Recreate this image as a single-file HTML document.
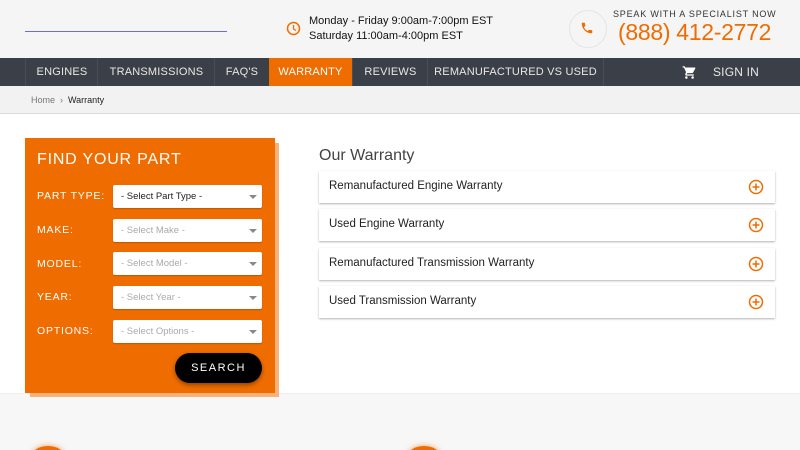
<!DOCTYPE html><html><head><style>
html,body{margin:0;width:800px;height:450px;overflow:hidden}
body{font-family:"Liberation Sans",sans-serif;background:#fff;position:relative}
.a{position:absolute}
.nav span{position:absolute;top:58px;height:28px;line-height:28px;color:#e8e8e8;font-size:11px;text-align:center;border-left:1px solid #4a4e57;letter-spacing:.2px}
.lbl{position:absolute;left:37px;color:#fff;font-size:10.5px;letter-spacing:.8px}
.sel{position:absolute;left:113px;width:149px;height:23px;background:#fff;border-radius:2px;font-size:9.5px;color:#aaa;line-height:23px;text-indent:8px;box-shadow:0 1px 1px rgba(0,0,0,.2)}
.sel:after{content:"";position:absolute;right:5px;top:10px;border:4px solid transparent;border-top:4px solid #888}
.acc{position:absolute;left:319px;width:456px;height:32px;background:#fff;box-shadow:0 1px 2px rgba(0,0,0,.3);font-size:11.5px;color:#222;line-height:31px;text-indent:10px}
.acc svg{position:absolute;right:11px;top:8px}
</style></head><body>
<div class="a" style="left:0;top:0;width:800px;height:58px;background:#f5f5f5"></div>
<div class="a" style="left:25px;top:31px;width:202px;height:1px;background:#6a6af0"></div>
<svg class="a" style="left:286px;top:21px" width="15" height="15" viewBox="0 0 15 15"><circle cx="7.5" cy="7.5" r="6" fill="none" stroke="#ef6c00" stroke-width="1.5"/><path d="M7.5 4v4l2.5 1.5" fill="none" stroke="#ef6c00" stroke-width="1.3"/></svg>
<div class="a" style="left:309px;top:14px;font-size:11px;line-height:15px;color:#111">Monday - Friday 9:00am-7:00pm EST<br>Saturday 11:00am-4:00pm EST</div>
<div class="a" style="left:569px;top:10px;width:36px;height:36px;border-radius:50%;border:1px solid #e4e4e4"></div>
<svg class="a" style="left:580px;top:21px" width="14" height="14" viewBox="0 0 24 24"><path fill="#ef6c00" d="M6.6 10.8c1.4 2.8 3.8 5.1 6.6 6.6l2.2-2.2c.3-.3.7-.4 1-.2 1.1.4 2.3.6 3.6.6.6 0 1 .4 1 1V20c0 .6-.4 1-1 1C10.6 21 3 13.4 3 4c0-.6.4-1 1-1h3.5c.6 0 1 .4 1 1 0 1.3.2 2.5.6 3.6.1.3 0 .7-.2 1z"/></svg>
<div class="a" style="left:613px;top:9px;font-size:9px;letter-spacing:.8px;color:#333">SPEAK WITH A SPECIALIST NOW</div>
<div class="a" style="left:618px;top:19px;font-size:23px;color:#ef6c00;letter-spacing:-.3px">(888) 412-2772</div>
<div class="a nav" style="left:0;top:58px;width:800px;height:28px;background:#3b3f47"></div>
<div class="nav">
<span style="left:25px;width:72px">ENGINES</span>
<span style="left:97px;width:117px">TRANSMISSIONS</span>
<span style="left:214px;width:54px">FAQ'S</span>
<span style="left:269px;width:83px;background:#ef6c00;color:#fff;border:0">WARRANTY</span>
<span style="left:352px;width:75px">REVIEWS</span>
<span style="left:427px;width:175px;border-right:1px solid #4a4e57">REMANUFACTURED VS USED</span>
<span style="left:706px;width:60px;border:0;font-size:12px">SIGN IN</span>
</div>
<svg class="a" style="left:682px;top:65px" width="15" height="15" viewBox="0 0 24 24"><path fill="#fff" d="M7 18a2 2 0 1 0 0 4 2 2 0 0 0 0-4zM1 2v2h2l3.6 7.6-1.4 2.4C5 15.4 5.6 17 7 17h12v-2H7.4l1.1-2h7.5c.8 0 1.4-.4 1.7-1l3.6-6.5A1 1 0 0 0 20.4 4H5.2l-.9-2zm16 16a2 2 0 1 0 0 4 2 2 0 0 0 0-4z"/></svg>
<div class="a" style="left:0;top:86px;width:800px;height:27px;background:#f2f2f2;border-bottom:1px solid #ddd"></div>
<div class="a" style="left:31px;top:95px;font-size:9px;color:#777">Home &nbsp;›&nbsp; <span style="color:#222">Warranty</span></div>
<div class="a" style="left:0;top:393px;width:800px;height:57px;background:#f7f7f7;border-top:1px solid #eee"></div>
<div class="a" style="left:32px;top:446px;width:32px;height:20px;border-radius:50%;background:#ef6c00;box-shadow:0 0 6px #f0a060"></div>
<div class="a" style="left:408px;top:446px;width:32px;height:20px;border-radius:50%;background:#ef6c00;box-shadow:0 0 6px #f0a060"></div>
<div class="a" style="left:30px;top:143px;width:249px;height:254px;background:#f8b27a"></div>
<div class="a" style="left:25px;top:138px;width:250px;height:255px;background:#ef6c00"></div>
<div class="a" style="left:37px;top:151px;color:#fff;font-size:16px;letter-spacing:.8px">FIND YOUR PART</div>
<div class="lbl" style="top:190px">PART TYPE:</div>
<div class="lbl" style="top:224px">MAKE:</div>
<div class="lbl" style="top:258px">MODEL:</div>
<div class="lbl" style="top:291px">YEAR:</div>
<div class="lbl" style="top:325px">OPTIONS:</div>
<div class="sel" style="top:185px;color:#222">- Select Part Type -</div>
<div class="sel" style="top:219px">- Select Make -</div>
<div class="sel" style="top:252px">- Select Model -</div>
<div class="sel" style="top:286px">- Select Year -</div>
<div class="sel" style="top:320px">- Select Options -</div>
<div class="a" style="left:175px;top:353px;width:87px;height:30px;border-radius:15px;background:#000;color:#fff;font-size:11px;letter-spacing:1.5px;text-align:center;line-height:30px;box-shadow:0 2px 4px rgba(0,0,0,.4)">SEARCH</div>
<div class="a" style="left:319px;top:147px;font-size:16px;color:#444">Our Warranty</div>
<div class="acc" style="top:171px">Remanufactured Engine Warranty<svg width="16" height="16" viewBox="0 0 16 16"><circle cx="8" cy="8" r="6.5" fill="none" stroke="#ef6c00" stroke-width="1.5"/><path d="M8 4.5v7M4.5 8h7" stroke="#ef6c00" stroke-width="1.5"/></svg></div>
<div class="acc" style="top:209px">Used Engine Warranty<svg width="16" height="16" viewBox="0 0 16 16"><circle cx="8" cy="8" r="6.5" fill="none" stroke="#ef6c00" stroke-width="1.5"/><path d="M8 4.5v7M4.5 8h7" stroke="#ef6c00" stroke-width="1.5"/></svg></div>
<div class="acc" style="top:248px">Remanufactured Transmission Warranty<svg width="16" height="16" viewBox="0 0 16 16"><circle cx="8" cy="8" r="6.5" fill="none" stroke="#ef6c00" stroke-width="1.5"/><path d="M8 4.5v7M4.5 8h7" stroke="#ef6c00" stroke-width="1.5"/></svg></div>
<div class="acc" style="top:286px">Used Transmission Warranty<svg width="16" height="16" viewBox="0 0 16 16"><circle cx="8" cy="8" r="6.5" fill="none" stroke="#ef6c00" stroke-width="1.5"/><path d="M8 4.5v7M4.5 8h7" stroke="#ef6c00" stroke-width="1.5"/></svg></div>
</body></html>
